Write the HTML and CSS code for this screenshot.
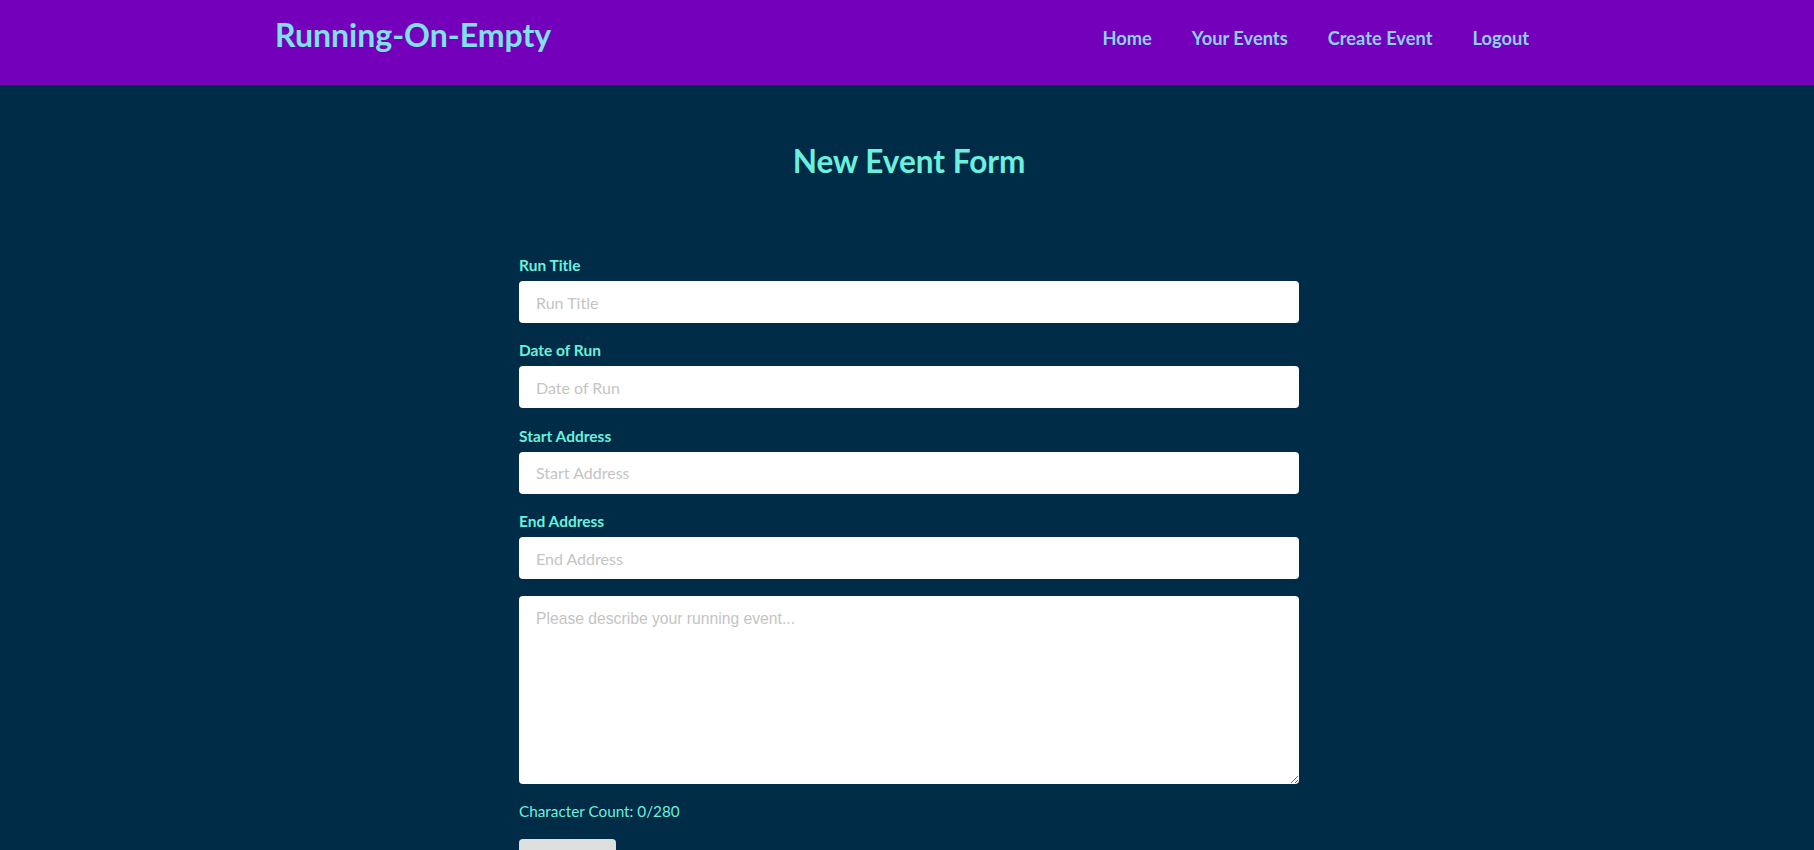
FILE: index.html
```html
<!DOCTYPE html>
<html lang="en">
<head>
<meta charset="utf-8">
<title>Running-On-Empty</title>
<link rel="stylesheet" href="styles.css">
</head>
<body>
<header class="site-header">
  <div class="header-inner">
    <a class="logo" href="#">Running-On-Empty</a>
    <nav class="nav">
      <a href="#">Home</a>
      <a href="#">Your Events</a>
      <a href="#">Create Event</a>
      <a href="#">Logout</a>
    </nav>
  </div>
</header>
<main class="page">
  <h1 class="form-title">New Event Form</h1>
  <form class="event-form">
    <div class="field">
      <label for="title">Run Title</label>
      <input id="title" type="text" placeholder="Run Title">
    </div>
    <div class="field">
      <label for="date">Date of Run</label>
      <input id="date" type="text" placeholder="Date of Run">
    </div>
    <div class="field">
      <label for="start">Start Address</label>
      <input id="start" type="text" placeholder="Start Address">
    </div>
    <div class="field">
      <label for="end">End Address</label>
      <input id="end" type="text" placeholder="End Address">
    </div>
    <textarea class="description" placeholder="Please describe your running event..."></textarea>
    <p class="char-count">Character Count: 0/280</p>
    <button type="submit" class="submit-btn">Submit</button>
  </form>
</main>
</body>
</html>
```

FILE: styles.css
```css
* { box-sizing: border-box; }
html, body {
  margin: 0;
  padding: 0;
}
body {
  background: #012c47;
  font-family: Lato, "Open Sans", sans-serif;
  min-height: 100vh;
}
.site-header {
  background: #7400bc;
  height: 85px;
}
.header-inner {
  max-width: 1264px;
  margin: 0 auto;
  padding: 0 10px 0 0;
  display: flex;
  justify-content: space-between;
  align-items: flex-start;
}
.logo {
  margin-top: 15px;
  font-size: 32px;
  font-weight: 700;
  line-height: 40px;
  color: #7fe1ea;
  text-decoration: none;
}
.nav {
  display: flex;
  gap: 40px;
  margin-top: 26px;
}
.nav a {
  font-size: 18.3px;
  font-weight: 700;
  line-height: 24px;
  color: #8ad2f0;
  text-decoration: none;
}
.page {
  padding-top: 57px;
  padding-left: 4px;
}
.form-title {
  margin: 0;
  text-align: center;
  font-size: 31.5px;
  font-weight: 700;
  line-height: 38px;
  color: #6af0de;
}
.event-form {
  width: 780px;
  margin: 76px auto 0;
  display: flex;
  flex-direction: column;
  align-items: flex-start;
}
.field {
  width: 100%;
  margin-bottom: 18.4px;
}
.field label {
  display: block;
  font-size: 15.5px;
  font-weight: 700;
  line-height: 18px;
  margin-bottom: 7px;
  color: #6af0de;
}
.field input {
  display: block;
  width: 100%;
  height: 42px;
  border: none;
  border-radius: 4px;
  padding: 0 17px;
  font-family: Lato, sans-serif;
  font-size: 16px;
  background: #fff;
  color: #333;
}
.field input::placeholder { color: #c4c4c4; }
.description {
  display: block;
  width: 100%;
  height: 188px;
  margin-top: -2px;
  border: none;
  border-radius: 4px;
  padding: 14.5px 17px;
  font-family: "Liberation Sans", Arial, sans-serif;
  font-size: 15.7px;
  background: #fff;
  resize: vertical;
}
.description::placeholder { color: #c4c4c4; }
.char-count {
  margin: 18px 0 0;
  font-size: 15.3px;
  line-height: 19px;
  color: #6af0de;
}
.submit-btn {
  margin-top: 18px;
  width: 97px;
  height: 40px;
  border: none;
  border-radius: 4px;
  background: #dedede;
  font-family: Lato, sans-serif;
  font-size: 16px;
  color: #333;
}
```
